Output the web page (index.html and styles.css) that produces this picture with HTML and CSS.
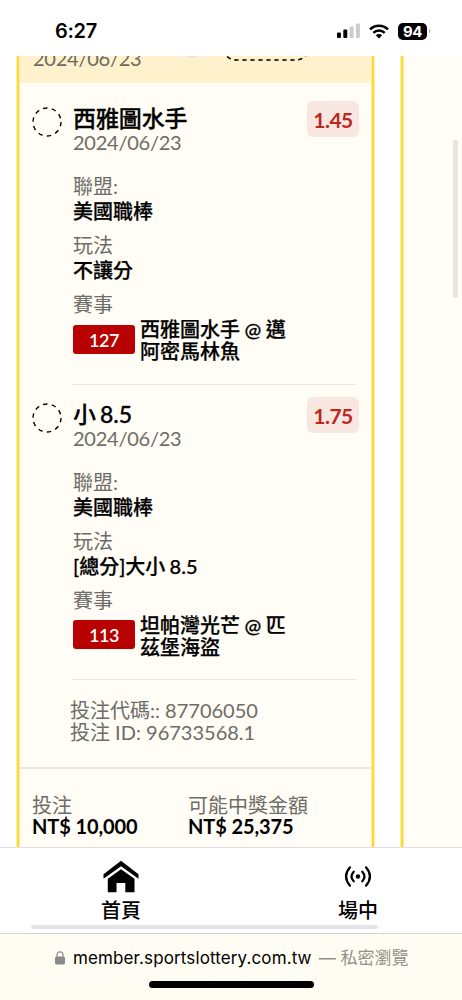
FILE: index.html
```html
<!DOCTYPE html>
<html lang="zh-Hant">
<head>
    <meta charset="UTF-8">
    <meta name="viewport" content="width=device-width, initial-scale=1">
    <title>投注紀錄</title>
    <link rel="stylesheet" href="styles.css">
</head>
<body>

    <header class="status-bar">
        <span class="clock">6:27</span>
        <svg class="signal" width="24" height="16" viewBox="0 0 24 16">
            <rect x="0" y="9.5" width="4" height="5.5" rx="1.2"/>
            <rect x="6.3" y="6.5" width="4" height="8.5" rx="1.2"/>
            <rect x="12.6" y="3.5" width="4" height="11.5" rx="1.2" fill="#ccc"/>
            <rect x="18.9" y="0.5" width="4" height="14.5" rx="1.2" fill="#ccc"/>
        </svg>
        <svg class="wifi" width="20" height="15" viewBox="0 0 20 15" fill="none" stroke="#000" stroke-width="2.5">
            <path d="M1 5.4a12.8 12.8 0 0 1 18 0"/>
            <path d="M4.3 8.8a8.1 8.1 0 0 1 11.4 0"/>
            <path d="M6.8 11.2a4.6 4.6 0 0 1 6.4 0L10 14.6z" fill="#000" stroke="none"/>
        </svg>
        <span class="battery">94</span>
        <svg width="4" height="6" viewBox="0 0 4 6"><path d="M1 .5a2.8 2.8 0 0 1 0 5z" fill="#bbb"/></svg>
    </header>

    <main class="bets">
        <section class="card">
            <div class="card-head">
                <span class="head-date">2024/06/23</span>
                <svg class="head-dot" width="16" height="16" viewBox="0 0 16 16"><circle cx="8" cy="8" r="8" fill="#e5e0df"/></svg>
                <svg class="head-pill" width="88" height="30" viewBox="0 0 88 30">
                    <rect x="1" y="1" width="86" height="28" rx="13" fill="none" stroke="#000" stroke-width="1.6" stroke-dasharray="4.3 3.7"/>
                </svg>
            </div>

            <div class="pick">
                <svg class="ring" width="30" height="30" viewBox="0 0 30 30"><circle cx="15" cy="15" r="14"/></svg>
                <div class="pick-body">
                    <h2 class="pick-name">西雅圖水手</h2>
                    <div class="pick-date">2024/06/23</div>
                    <dl class="fields">
                        <dt>聯盟:</dt>
                        <dd>美國職棒</dd>
                        <dt>玩法</dt>
                        <dd>不讓分</dd>
                        <dt>賽事</dt>
                    </dl>
                    <div class="match">
                        <span class="match-no">127</span>
                        <span class="match-name">西雅圖水手 @ 邁阿密馬林魚</span>
                    </div>
                </div>
                <span class="odds">1.45</span>
            </div>

            <div class="pick">
                <svg class="ring" width="30" height="30" viewBox="0 0 30 30"><circle cx="15" cy="15" r="14"/></svg>
                <div class="pick-body">
                    <h2 class="pick-name">小 8.5</h2>
                    <div class="pick-date">2024/06/23</div>
                    <dl class="fields">
                        <dt>聯盟:</dt>
                        <dd>美國職棒</dd>
                        <dt>玩法</dt>
                        <dd>[總分]大小 8.5</dd>
                        <dt>賽事</dt>
                    </dl>
                    <div class="match">
                        <span class="match-no">113</span>
                        <span class="match-name">坦帕灣光芒 @ 匹茲堡海盜</span>
                    </div>
                </div>
                <span class="odds">1.75</span>
            </div>

            <div class="codes">
                <div>投注代碼:: 87706050</div>
                <div>投注 ID: 96733568.1</div>
            </div>

            <div class="totals">
                <div class="total stake">
                    <span>投注</span>
                    <strong>NT$ 10,000</strong>
                </div>
                <div class="total">
                    <span>可能中獎金額</span>
                    <strong>NT$ 25,375</strong>
                </div>
            </div>
        </section>

        <section class="card next-card"></section>
        <div class="scroll-y"></div>
    </main>

    <nav class="tabs">
        <a class="tab">
            <svg width="36" height="33" viewBox="0 0 36 33">
                <path d="M0.5 14.2L18 0.8l17.5 13.4v4.6L18 6.2 0.5 18.800z"/>
                <path d="M4.8 18.8L18 9.3l13.500 9.500V32.300H22.300V23H13.500v9.300H4.800z"/>
            </svg>
            <span>首頁</span>
        </a>
        <a class="tab">
            <svg width="36" height="33" viewBox="0 0 36 33" fill="none" stroke="#000" stroke-width="2.2" stroke-linecap="round">
                <circle cx="18" cy="16.5" r="2.2" fill="#000" stroke="none"/>
                <path d="M13.7 11.700q-4.200 4.800 0 9.600M22.300 11.700q4.200 4.800 0 9.600"/>
                <path d="M10 7.300q-8 9.200 0 18.400M26 7.300q8 9.200 0 18.400"/>
            </svg>
            <span>場中</span>
        </a>
        <div class="scroll-x"></div>
    </nav>

    <footer class="address-bar">
        <div class="address">
            <svg width="10" height="14" viewBox="0 0 10 14">
                <rect x="0" y="5.5" width="10" height="8" rx="1.5" fill="#8a8a8a"/>
                <path d="M2 6V3.800a3 3 0 0 1 6 0V6" fill="none" stroke="#8a8a8a" stroke-width="1.2"/>
            </svg>
            <span class="host">member.sportslottery.com.tw</span>
            <span class="private">— 私密瀏覽</span>
        </div>
        <div class="home-bar"></div>
    </footer>

</body>
</html>
```
FILE: styles.css
```css
* {
    box-sizing: border-box;
}

body {
    margin: 0;
    height: 1000px;
    display: flex;
    flex-direction: column;
    overflow: hidden;
    background: #fff;
    color: #000;
    font-family: Lato, "Noto Sans CJK TC", sans-serif;
    font-size: 20px;
    line-height: 22px;
}

svg {
    flex-shrink: 0;
    display: block;
}

/* Status bar */
.status-bar {
    height: 56px;
    flex-shrink: 0;
    display: flex;
    align-items: center;
    padding: 6px 30px 0 55px;
    font-family: Inter, sans-serif;
}

.clock {
    flex: 1;
    font-size: 20px;
    font-weight: 600;
    letter-spacing: -0.3px;
}

.wifi {
    margin: 0 9px 0 8px;
}

.battery {
    width: 29px;
    height: 17px;
    margin-right: 1px;
    border-radius: 5px;
    background: #000;
    color: #fff;
    font-size: 15px;
    font-weight: 700;
    line-height: 17px;
    text-align: center;
    letter-spacing: -0.5px;
}

/* Bet cards */
.bets {
    position: relative;
    height: 791px;
    flex-shrink: 0;
    display: flex;
    gap: 27px;
    padding-left: 17px;
    overflow: hidden;
}

.card {
    width: 357px;
    flex-shrink: 0;
    border: solid #ffd92e;
    border-width: 0 2px;
    background: #fffdf5;
    box-shadow: 0 0 0 1px #fff0ad, inset 1px 0 #ffedaa, inset -1px 0 #ffedaa;
}

.card-head {
    height: 27px;
    display: flex;
    align-items: flex-end;
    margin: 0 1px 6px;
    padding-left: 13px;
    background: #fff1cb;
}

.head-date {
    width: 151px;
    margin-bottom: 14px;
    color: #6b695f;
    letter-spacing: -0.25px;
}

.head-dot {
    margin-bottom: 25px;
}

.head-pill {
    margin: 0 0 22px 22px;
}

.pick {
    height: 295.5px;
    display: flex;
    padding-left: 13px;
}

.ring {
    margin-top: 18px;
    fill: none;
    stroke: #000;
    stroke-width: 1.4;
    stroke-dasharray: 4.4 4.4;
}

.pick-body {
    width: 283px;
    margin-left: 11px;
    padding-top: 16px;
    border-bottom: 1.5px solid #e9e4df;
}

.pick-name {
    margin: 0;
    font-size: 23px;
    font-weight: 500;
    line-height: 26px;
    letter-spacing: -0.1px;
    word-spacing: -1.5px;
    -webkit-text-stroke: 0.3px;
}

.pick-date {
    color: #6d6c68;
    letter-spacing: -0.25px;
}

.fields {
    margin: 21px 0 1px;
    line-height: 25px;
}

.fields dt {
    color: #6d6c68;
}

.fields dd {
    margin: 0 0 9px;
    font-weight: 500;
    word-spacing: -0.8px;
    -webkit-text-stroke: 0.25px;
}

.match {
    display: flex;
    align-items: center;
    gap: 5px;
}

.match-no {
    width: 62px;
    height: 29px;
    margin-bottom: 2px;
    border-radius: 3px;
    background: #b90000;
    color: #fff;
    font-size: 18px;
    font-weight: 600;
    line-height: 30px;
    text-align: center;
    letter-spacing: -0.5px;
}

.match-name {
    width: 152px;
    font-weight: 500;
    word-spacing: -0.5px;
    -webkit-text-stroke: 0.25px;
}

.odds {
    width: 52px;
    height: 36px;
    margin: 12px 0 0 -49px;
    border-radius: 6px;
    background: #f8e7e0;
    color: #bd281f;
    font-size: 21px;
    font-weight: 700;
    line-height: 37px;
    text-align: center;
    letter-spacing: -0.5px;
}

.codes {
    height: 89px;
    padding: 19px 0 0 51px;
    border-bottom: 2px solid #ece8e3;
    color: #6d6c68;
}

.totals {
    display: flex;
    padding: 25px 0 0 13px;
}

.total {
    display: flex;
    flex-direction: column;
    color: #6d6c68;
}

.total strong {
    color: #000;
    font-weight: 700;
    line-height: 21px;
    letter-spacing: -0.1px;
}

.stake {
    width: 156px;
}

.scroll-y {
    position: absolute;
    top: 84px;
    right: 4px;
    width: 5px;
    height: 158px;
    border-radius: 3px;
    background: #e8e5df;
}

/* Bottom tabs */
.tabs {
    position: relative;
    height: 86px;
    flex-shrink: 0;
    display: flex;
    padding-left: 2.5px;
    border-top: 1px solid #dedede;
    background: #fff;
}

.tab {
    width: 237px;
    flex-shrink: 0;
    display: flex;
    flex-direction: column;
    align-items: center;
    padding-top: 12px;
    font-weight: 500;
}

.tab span {
    margin-top: 6px;
}

.scroll-x {
    position: absolute;
    left: 31px;
    bottom: 4px;
    width: 347px;
    height: 4px;
    border-radius: 2px;
    background: #e5e5e5;
}

/* Browser address bar */
.address-bar {
    flex: 1;
    border-top: 1px solid #d5d4ce;
    background: #fffcf3;
}

.address {
    height: 47px;
    display: flex;
    align-items: center;
    padding-left: 55px;
    font-family: Inter, "Noto Sans CJK TC", sans-serif;
    font-size: 17px;
}

.host {
    margin: 0 7px 0 8px;
    letter-spacing: 0.12px;
}

.private {
    color: #929087;
}

.home-bar {
    width: 165px;
    height: 7px;
    margin-left: 149px;
    border-radius: 4px;
    background: #000;
}
```
